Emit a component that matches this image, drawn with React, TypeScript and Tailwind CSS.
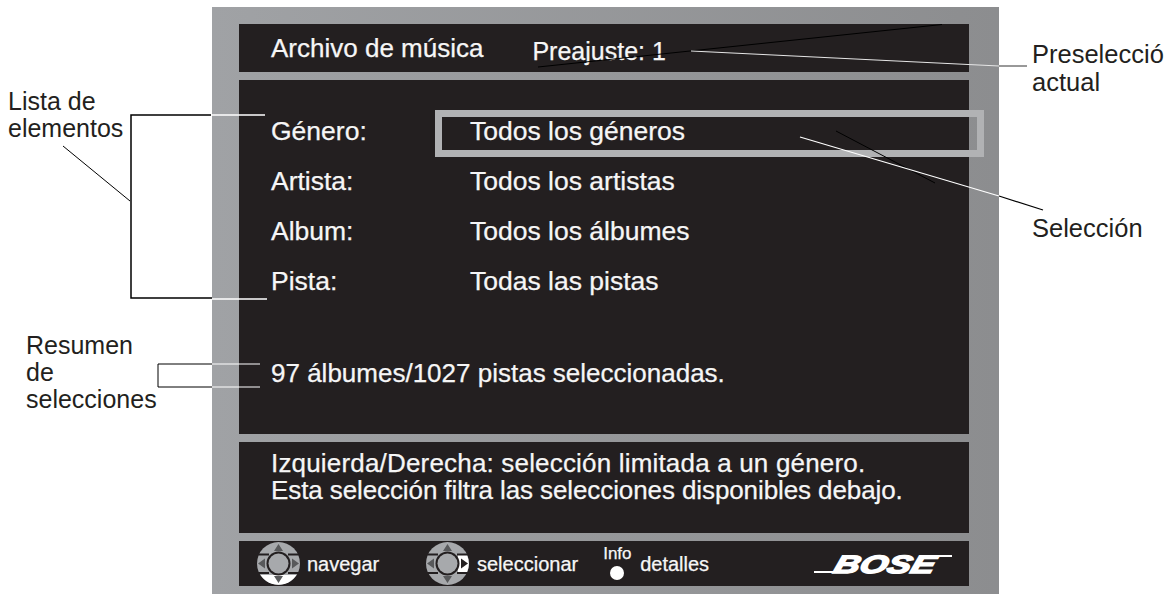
const rows = [
  { label: "Género:", value: "Todos los géneros" },
  { label: "Artista:", value: "Todos los artistas" },
  { label: "Album:", value: "Todos los álbumes" },
  { label: "Pista:", value: "Todas las pistas" },
];

// round pad with one highlighted sector, the picture has it twice
function Pad({ active }: { active: "down" | "right" }) {
  return (
    <svg width="43" height="43" viewBox="0 0 43 43" className="shrink-0">
      <circle cx="21.5" cy="21.5" r="21.5" fill="#a7a9ac" />
      {active === "down" && <path d="M3.5 33H39.5A21.5 21.5 0 0 1 3.5 33Z" fill="#fff" />}
      {active === "right" && <path d="M32 13H41A21.5 21.5 0 0 1 41 30H32Z" fill="#fff" />}
      <circle cx="21.5" cy="21.5" r="12" fill="#231f20" />
      <circle cx="21.5" cy="21.5" r="10" fill="#a7a9ac" />
      <path d="M0 12.5H12M0 31H12M31 12.5H43M31 31H43" stroke="#231f20" strokeWidth="2" />
      <path d="M21.5 2 26 9H17Z M21.5 41 26 34H17Z M1 21.5 8 16.5V26.5Z" fill="#58595b" />
      <path d="M42 21.5 35 16.5V26.5Z" fill={active === "right" ? "#231f20" : "#58595b"} />
    </svg>
  );
}

export default function App() {
  return (
    <div className="relative h-[598px] w-[1165px] overflow-hidden bg-white font-['Liberation_Sans',Arial,sans-serif]">
      <div className="flex h-full items-start">
        <div className="w-[212px] shrink-0 text-[25px] leading-[27px] text-[#231f20]">
          <div className="pt-[88px] pl-[8px]">
            <div>Lista de</div>
            <div>elementos</div>
          </div>
          <div className="pt-[190px] pl-[26px]">
            <div>Resumen</div>
            <div>de</div>
            <div>selecciones</div>
          </div>
        </div>

        <div className="mt-[7px] flex h-[587px] w-[787px] shrink-0 flex-col gap-[8px] bg-linear-to-r from-[#a0a2a5] to-[#8c8d8f] pt-[17px] pb-[9px] pl-[27px] pr-[30px] text-[#f6f6f6] [-webkit-text-stroke:0.25px_#f6f6f6]">
          <div className="flex h-[48px] shrink-0 items-center bg-[#231f20] pl-[32px] text-[26px] leading-[30px]">
            <span>Archivo de música</span>
            <span className="mt-[6px] ml-[49px] text-[25px]">Preajuste: 1</span>
          </div>

          <div className="relative h-[354px] shrink-0 bg-[#231f20] pl-[32px] pt-[36px] text-[26px] leading-[30px]">
            {rows.map((row) => (
              <div key={row.label} className="flex h-[50px] items-start text-[26.5px]">
                <span className="w-[199px] shrink-0">{row.label}</span>
                <span>{row.value}</span>
              </div>
            ))}
            <div className="absolute top-[30px] left-[196px] h-[47px] w-[549px] border-[7px] border-[#b1b2b4]" />
            <div className="pt-[42px]">97 álbumes/1027 pistas seleccionadas.</div>
          </div>

          <div className="flex h-[91px] shrink-0 flex-col bg-[#231f20] pl-[32px] pt-[8px] text-[26px] leading-[27px]">
            <div className="tracking-[0.18px]">Izquierda/Derecha: selección limitada a un género.</div>
            <div className="tracking-[-0.1px]">Esta selección filtra las selecciones disponibles debajo.</div>
          </div>

          <div className="flex h-[45px] shrink-0 items-center bg-[#231f20] pl-[18px] pr-[17px] text-[20px]">
            <Pad active="down" />
            <span className="ml-[7px] w-[119px]">navegar</span>
            <Pad active="right" />
            <span className="ml-[8px]">seleccionar</span>
            <div className="relative ml-[25px] h-[45px] w-[37px]">
              <span className="absolute top-0 left-0 text-[17px]">Info</span>
              <span className="absolute top-[25px] left-[7px] h-[14px] w-[14px] rounded-full bg-white" />
            </div>
            <span>detalles</span>
            <div className="relative ml-auto h-[18px] w-[138px]">
              <span className="absolute bottom-0 left-0 h-[2px] w-[26px] bg-white" />
              <span className="absolute top-0 right-0 h-[2px] w-[30px] bg-white" />
              <span className="absolute top-[-3px] left-[21px] origin-left scale-x-[1.42] -skew-x-12 text-[25px] leading-[24px] font-bold italic [-webkit-text-stroke:1.5px_white] text-white">BOSE</span>
            </div>
          </div>
        </div>

        <div className="shrink-0 pl-[33px] text-[25.5px] leading-[28px] whitespace-nowrap text-[#231f20]">
          <div className="pt-[40px]">
            <div>Preselecció</div>
            <div>actual</div>
          </div>
          <div className="pt-[118px]">Selección</div>
        </div>
      </div>

      {/* leader lines over everything */}
      <svg width="1165" height="598" className="pointer-events-none absolute top-0 left-0">
        <path d="M211 115H131V298H212" fill="none" stroke="#000" strokeWidth="1.5" />
        <path d="M63 146 130 201" stroke="#000" strokeWidth="1" />
        <path d="M212 115H265M212 299H267" stroke="#fff" strokeWidth="1.5" />
        <path d="M212 364H158V387H212" fill="none" stroke="#000" strokeWidth="1" />
        <path d="M212 364H260M212 387H260" stroke="#fff" strokeWidth="1" />
        <path d="M942 24.5 538 67" stroke="#000" strokeWidth="1" />
        <path d="M691 51 999 66" stroke="#e6e6e6" strokeWidth="1" />
        <path d="M999 66H1027" stroke="#333" strokeWidth="1" />
        <path d="M836 131 935 183" stroke="#000" strokeWidth="1" />
        <path d="M800 137 999 196" stroke="#fff" strokeWidth="1.2" />
        <path d="M999 196 1043 210" stroke="#000" strokeWidth="1.2" />
      </svg>
    </div>
  );
}
